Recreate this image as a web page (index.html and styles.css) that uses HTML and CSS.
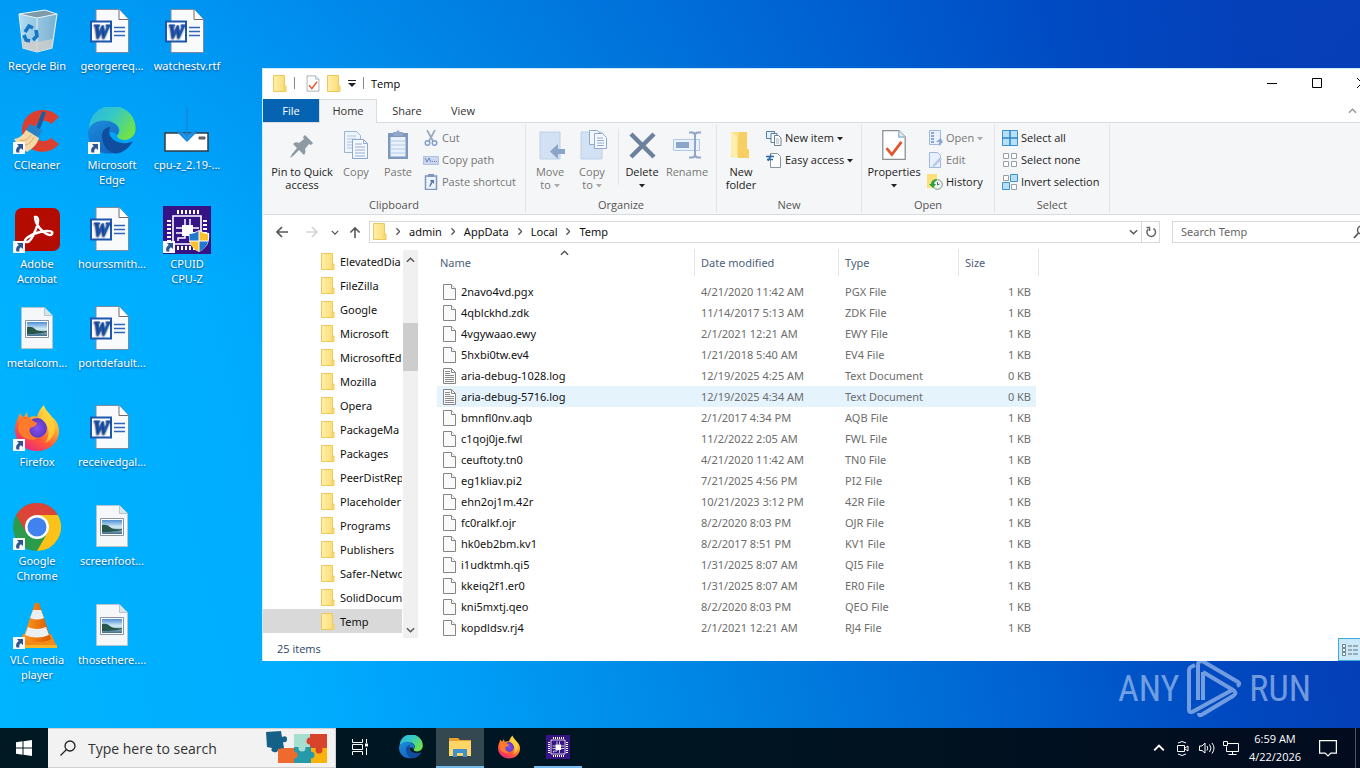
FILE: index.html
```html
<!DOCTYPE html>
<html lang="en">
<head>
<meta charset="utf-8">
<title>Temp</title>
<link rel="stylesheet" href="styles.css">
</head>
<body>
<svg class="sprite" aria-hidden="true">
  <defs>
    <linearGradient id="gFold" x1="0" x2="1"><stop offset="0" stop-color="#ffefa6"/><stop offset="1" stop-color="#fbdc76"/></linearGradient>
    <linearGradient id="gEdgeA" x1="0" y1="0" x2="1" y2=".6"><stop offset="0" stop-color="#27b5e8"/><stop offset=".5" stop-color="#36c9c4"/><stop offset="1" stop-color="#6fe24a"/></linearGradient>
    <linearGradient id="gEdgeB" x1="0" y1="0" x2=".6" y2="1"><stop offset="0" stop-color="#1b8edb"/><stop offset="1" stop-color="#1466c0"/></linearGradient>
    <linearGradient id="gFox" x1=".8" y1="0" x2=".2" y2="1"><stop offset="0" stop-color="#fff44f"/><stop offset=".35" stop-color="#ffa92e"/><stop offset=".65" stop-color="#ff5a36"/><stop offset="1" stop-color="#e8208a"/></linearGradient>
    <radialGradient id="gFoxIn"><stop offset="0" stop-color="#8a4ff0"/><stop offset="1" stop-color="#5b3bc4"/></radialGradient>
    <linearGradient id="gBin" x1="0" x2="1"><stop offset="0" stop-color="#cfe6f2"/><stop offset="1" stop-color="#8fb4c8"/></linearGradient>
    <linearGradient id="gSky" x1="0" y1="0" x2="0" y2="1"><stop offset="0" stop-color="#4f8fd6"/><stop offset=".5" stop-color="#d4ecf7"/><stop offset="1" stop-color="#3c6a8c"/></linearGradient>
    <linearGradient id="gCone" x1="0" x2="1"><stop offset="0" stop-color="#ff9a1f"/><stop offset="1" stop-color="#d95800"/></linearGradient>
  </defs>
  <symbol id="shortcut" viewBox="0 0 12 12"><path d="M0 0h12v12H0z" fill="#f6f8fa"/><path d="M4 2h6v6L8 6.3C6.300 7.200 6 8.500 6.400 10.500H3.500C2.400 7.600 3.500 5.300 5.800 3.900z" fill="#2d5591"/></symbol>
  <symbol id="folder" viewBox="0 0 14 17"><path d="M.5.5h11v10.500h1.500v5.500H.5z" fill="url(#gFold)" stroke="#edc95b"/><path d="M11 11v5" stroke="#f3cf62"/></symbol>
  <symbol id="file" viewBox="0 0 13 16"><path d="M.5.5h8l4 4v11H.5z" fill="#fafafa" stroke="#858585"/><path d="M8.500.5v4h4" fill="#fff" stroke="#858585"/></symbol>
  <symbol id="log" viewBox="0 0 13 16"><path d="M.5.5h8l4 4v11H.5z" fill="#fafafa" stroke="#858585"/><path d="M8.500.5v4h4M2 3.500h5M2 5.500h5M2 7.500h9M2 9.500h9M2 11.500h9M2 13.500h9" fill="none" stroke="#8a8a8a"/></symbol>
  <symbol id="props" viewBox="0 0 24 30"><path d="M1.500 1.500h15l6 6v21h-21z" fill="#fff" stroke="#8b9097" stroke-width="1.200"/><path d="M16.500 1.500v6h6" fill="#dceafb" stroke="#9ab2cf" stroke-width="1.200"/><path d="M5 18l5 6L19 12" fill="none" stroke="#e2562c" stroke-width="2.600"/></symbol>
  <symbol id="word" viewBox="0 0 48 48"><path d="M8 1.500h23l9.500 10V44.500H8z" fill="#f9fafc" stroke="#7d8ba0"/><path d="M31 1.500v10h9.500" fill="#fff" stroke="#72686d"/><path d="M26 19.500h11M26 23.500h11M26 27.500h11" stroke="#3165b8" stroke-width="1.400"/><path d="M2 12.500h22v22H2z" fill="#1d56ae"/><path d="M4 14.500h18v18H4z" fill="#fff"/><text x="13" y="30" text-anchor="middle" class="word-letter">W</text></symbol>
  <symbol id="picture" viewBox="0 0 48 48"><path d="M8.500 2.500h23l8 8v33h-31z" fill="#f6f7f8" stroke="#b5c4cd"/><path d="M31.500 2.500v8h8" fill="#d9e6ec" stroke="#b5c4cd"/><path d="M12.500 15.500h23v17h-23z" fill="#fff" stroke="#8994a4"/><path d="M14 17h20v14H14z" fill="url(#gSky)"/><path d="M14 22q5-1 8 2t12 2v1q-8 2-20 2z" fill="#28564b"/></symbol>
  <symbol id="edge" viewBox="0 0 48 48"><path d="M1 22A23 22 0 0 1 47.500 20c1 8-5 13-11 13-5 0-8-2-7-5 5-5 0-13-9-13C11 15 4 17 1 22z" fill="url(#gEdgeA)"/><path d="M0 25C2 15 12 12 21 14c8 2 12 9 8 14-2-3-6-4-9-2-6 4-4 15 6 20C11 49 0 39 0 25z" fill="url(#gEdgeB)"/><path d="M14 31c-1-6 3-11 8-11-3 7 2 15 12 16 5 1 9-1 11-2-4 8-13 14-20 12-6-2-10-8-11-15z" fill="#0f4d9e"/></symbol>
  <symbol id="firefox" viewBox="0 0 48 48"><path d="M2 26C2 19 5 14 7 9l3 5 4-6 1 6c4-2 7-2 9-1 1-5 4-9 7-12 1 5 4 7 8 12 4 3 7 8 7 14C46 39 36 47 24 47S2 38 2 26z" fill="url(#gFox)"/><circle cx="24" cy="24" r="10" fill="url(#gFoxIn)"/><path d="M7 14c5-3 10-1 13 3l4 2c0 2-3 4-7 5-2 5 3 10 9 10-9 5-21-1-21-11z" fill="#ff7b2b"/><path d="M26 13c6-2 4-7 6-9 2 4 6 6 8 12 4 10 1 19-8 23 6-8 5-18-6-26z" fill="#ffd43a" opacity=".85"/></symbol>
  <symbol id="cpuz" viewBox="0 0 48 48"><path d="M0 0h48v48H0z" fill="#371486"/><path d="M10 10h28v28H10z" fill="none" stroke="#fff" stroke-width="1.600"/><path d="M15 8V4M19 8V4M23 8V4M27 8V4M31 8V4M35 8V4M15 44v-4M19 44v-4M23 44v-4M27 44v-4M31 44v-4M35 44v-4M8 15H4M8 19H4M8 23H4M8 27H4M8 31H4M8 35H4M44 15h-4M44 19h-4M44 23h-4M44 27h-4M44 31h-4M44 35h-4" stroke="#fff" stroke-width="2"/><path d="M19 19h11v11H19z" fill="#fff"/><path d="M22 19v-6M27 19v-6M19 22h-6M19 27h-6M30 22h6M30 27h6M22 30v2h-7v3M27 30v6" stroke="#fff" stroke-width="1.500" fill="none"/></symbol>
  <symbol id="chev" viewBox="0 0 10 6"><path d="M1 1l4 4 4-4" fill="none" stroke="currentColor" stroke-width="1.600"/></symbol>
  <symbol id="tri" viewBox="0 0 6 4"><path d="M0 0h6L3 3.500z" fill="currentColor"/></symbol>
</svg>

<main class="desktop">
  <ul class="icons">
    <li><a class="shortcut" href="#"><svg class="ico" viewBox="0 0 48 48"><path d="M6 6l26-4 12 4-5 34-15 4-13-4z" fill="url(#gBin)" opacity=".85"/><path d="M6 6l18 4 20-4-12-4z" fill="#7e9bab" stroke="#e9f4fa"/><path d="M24 10v33M6 6l4 34 14 4 15-4 5-34" fill="none" stroke="#dcecf4" stroke-width="1.200"/><path d="M24 44l15-4 1-9-16 3zM10 40l14 4V34L9 31z" fill="#d7cfc8" opacity=".75"/><path d="M12 24l4-6 4 2M11 27l2 5 4 1M23 22l1 6-4 4" fill="none" stroke="#1476c4" stroke-width="3.600"/></svg><span>Recycle Bin</span></a></li>
    <li><a class="shortcut" href="#"><svg class="ico" viewBox="0 0 48 48"><path d="M46 10l-8 7c-6-7-17-2-17 7 0 10 11 13 17 7l8 6C35 51 9 46 9 24 9 2 35-3 46 10z" fill="#dc3f30"/><path d="M31 5l-7 19" stroke="#1c5c9d" stroke-width="4"/><path d="M17 17l12 6-4 9-13-8z" fill="#2782c6"/><path d="M13 23l13 8c-2 7-7 11-12 14-5-3-9-6-13-13 6-1 9-4 12-9z" fill="#f5d8a6"/><path d="M7 33q7 2 11-5M12 38q5 0 9-8" stroke="#d9ae6a" fill="none"/></svg><svg class="badge"><use href="#shortcut"/></svg><span>CCleaner</span></a></li>
    <li><a class="shortcut" href="#"><svg class="ico" viewBox="0 0 48 48"><rect x="2" y="2" width="45" height="43" rx="7" fill="#b30b00"/><path d="M22 11c4-1 4 5 1 12-3 8-7 14-10 13-4-2 5-8 14-10 8-2 14-1 12 2-2 4-13-4-16-12-1-3-1-5-1-5z" fill="none" stroke="#fff" stroke-width="2.400"/></svg><svg class="badge"><use href="#shortcut"/></svg><span>Adobe<br>Acrobat</span></a></li>
    <li><a class="shortcut" href="#"><svg class="ico"><use href="#picture"/></svg><span>metalcom...</span></a></li>
    <li><a class="shortcut" href="#"><svg class="ico"><use href="#firefox"/></svg><svg class="badge"><use href="#shortcut"/></svg><span>Firefox</span></a></li>
    <li><a class="shortcut" href="#"><svg class="ico" viewBox="0 0 48 48"><circle cx="24" cy="24" r="24" fill="#2a9c4b"/><path d="M24 24L3.200 12A24 24 0 0 1 44.800 12z" fill="#db4437"/><path d="M24 12h20.800A24 24 0 0 1 24 48L34.400 30z" fill="#fbc31a"/><path d="M3.200 12L13.600 30 24 24V12z" fill="#db4437"/><circle cx="24" cy="24" r="12" fill="#fff"/><circle cx="24" cy="24" r="9.500" fill="#4182ee"/></svg><svg class="badge"><use href="#shortcut"/></svg><span>Google<br>Chrome</span></a></li>
    <li><a class="shortcut" href="#"><svg class="ico" viewBox="0 0 48 48"><path d="M10 32h28l6 13H6z" fill="#f58a16"/><path d="M6 43h38v3H6z" fill="#f7b52c"/><path d="M22 1h4l12 36c-4 4-24 4-28 0z" fill="url(#gCone)"/><path d="M20 8h8l3 8q-7 3-14 0zM15 25q9 4 18 0l3 8q-12 5-24 0z" fill="#eceff1"/></svg><svg class="badge"><use href="#shortcut"/></svg><span>VLC media<br>player</span></a></li>
    <li><a class="shortcut" href="#"><svg class="ico"><use href="#word"/></svg><span>georgereq...</span></a></li>
    <li><a class="shortcut" href="#"><svg class="ico"><use href="#edge"/></svg><svg class="badge"><use href="#shortcut"/></svg><span>Microsoft<br>Edge</span></a></li>
    <li><a class="shortcut" href="#"><svg class="ico"><use href="#word"/></svg><span>hourssmith...</span></a></li>
    <li><a class="shortcut" href="#"><svg class="ico"><use href="#word"/></svg><span>portdefault...</span></a></li>
    <li><a class="shortcut" href="#"><svg class="ico"><use href="#word"/></svg><span>receivedgal...</span></a></li>
    <li><a class="shortcut" href="#"><svg class="ico"><use href="#picture"/></svg><span>screenfoot...</span></a></li>
    <li><a class="shortcut" href="#"><svg class="ico"><use href="#picture"/></svg><span>thosethere....</span></a></li>
    <li><a class="shortcut" href="#"><svg class="ico"><use href="#word"/></svg><span>watchestv.rtf</span></a></li>
    <li><a class="shortcut" href="#"><svg class="ico" viewBox="0 0 48 48"><path d="M2 26h43v18H2z" fill="#fff" stroke="#303c44" stroke-width="1.500"/><path d="M36 30h6v2h-6z" fill="#777" stroke="#555"/><path d="M24 0v30M14 24l10 10 10-10-10 4z" fill="#1e97ea" stroke="#1787d8" stroke-width="1.400"/></svg><span>cpu-z_2.19-...</span></a></li>
    <li><a class="shortcut" href="#"><svg class="ico"><use href="#cpuz"/></svg><svg class="badge"><use href="#shortcut"/></svg><svg class="shield" viewBox="0 0 22 22"><path d="M11 0c3 2 7 3 10 3 1 9-2 15-10 19C3 18 0 12 1 3c3 0 7-1 10-3z" fill="#fff"/><path d="M10.500 1v9.500H1.500V4c3 0 6-1 9-3zM11.500 11.500h8.500c-1 4-4 8-8.500 10z" fill="#2277cf"/><path d="M11.500 1v9.500H20V4c-3 0-6-1-8.500-3zM10.500 11.500H2c1 4 4 8 8.500 10z" fill="#fbc02d"/></svg><span>CPUID<br>CPU-Z</span></a></li>
  </ul>

  <div class="watermark">
    <span>ANY</span>
    <svg viewBox="0 0 56 62"><path d="M9 7L5 9Q3 10 3 13v38q0 5 5 2l40-22M12 42V8q0-7 6-4l34 20q3 2-1 4M17 14l30 18q5 3 0 6L17 56q-4 3-4-1M17 14v28" fill="none" stroke="currentColor" stroke-width="4"/></svg>
    <span>RUN</span>
  </div>

  <section class="window" aria-label="Temp">
    <header class="titlebar">
      <svg class="folder"><use href="#folder"/></svg><i class="rule"></i>
      <svg class="mini-props"><use href="#props"/></svg><svg class="folder"><use href="#folder"/></svg>
      <svg class="qat" viewBox="0 0 8 7"><path d="M0 .5h8" stroke="#222"/><path d="M0 3h8L4 7z" fill="#222"/></svg><i class="rule"></i>
      <h1>Temp</h1>
      <div class="controls">
        <button aria-label="Minimize"><svg viewBox="0 0 10 10"><path d="M0 5.500h10" stroke="#000"/></svg></button>
        <button aria-label="Maximize"><svg viewBox="0 0 10 10"><path d="M.5.5h9v9h-9z" stroke="#000" fill="none"/></svg></button>
        <button aria-label="Close"><svg viewBox="0 0 10 10"><path d="M0 0l10 10M10 0L0 10" stroke="#000"/></svg></button>
      </div>
    </header>
    <nav class="tabs">
      <button class="tab file">File</button><button class="tab active">Home</button><button class="tab">Share</button><button class="tab">View</button>
      <button class="collapse" aria-label="Collapse ribbon"><svg class="chev up"><use href="#chev"/></svg></button>
    </nav>
    <div class="ribbon">
      <section class="group clipboard"><div class="tools">
        <button class="big pin"><svg viewBox="0 0 32 32"><path d="M19 6l8 8-2 2-2-1-4 5c1 3 0 5-1 6l-5-5-6 6-3 2 2-4 5-6-4-4c2-2 4-2 6-1l5-4-1-2z" fill="#8d99a3"/></svg><span>Pin to Quick<br>access</span></button>
        <button class="big off"><svg viewBox="0 0 32 32"><path d="M4.500 2.500h12l4 4v17h-16z" fill="#eef4fd" stroke="#9cb4d4"/><path d="M7 7h9M7 10h9M7 13h9M7 16h9M7 19h9" stroke="#afc3e0"/><path d="M12.500 10.500h11l4 4v15h-15z" fill="#f5f9ff" stroke="#8ba6cb"/><path d="M23.500 10.500v4h4M15 15h7M15 18h10M15 21h10M15 24h10M15 27h10" fill="none" stroke="#94abd0"/></svg><span>Copy</span></button>
        <button class="big off"><svg viewBox="0 0 32 32"><path d="M6 4h20v26H6z" fill="#7d97be"/><path d="M8.500 8h15v19.500h-15z" fill="#e9f2fc"/><path d="M9 12h14M9 16h14M9 20h14M9 24h14" stroke="#b4c9e5"/><path d="M11 3h3l2-2 2 2h3v4H11z" fill="#90a7c9"/></svg><span>Paste</span></button>
        <div class="stack">
          <button class="small off"><svg viewBox="0 0 16 16"><path d="M4 0l6 11M12 0L6 11" stroke="#98a8bd" stroke-width="1.700"/><circle cx="4.500" cy="13" r="2.300" fill="none" stroke="#7f9fcf" stroke-width="1.500"/><circle cx="11.500" cy="13" r="2.300" fill="none" stroke="#7f9fcf" stroke-width="1.500"/></svg><span>Cut</span></button>
          <button class="small off"><svg viewBox="0 0 16 16"><path d="M.5 4.500h15v8H.5z" fill="#c9d8f0" stroke="#b1c3e0"/><path d="M2 6l2 4 2-4 2 4M9 9.500h1M11 9.500h1M13 9.500h1" stroke="#6b86b5" fill="none"/></svg><span>Copy path</span></button>
          <button class="small off"><svg viewBox="0 0 16 16"><path d="M2.500 2h11v13.500h-11z" fill="#eef4fc" stroke="#7d97be" stroke-width="1.500"/><path d="M5 0h6v3H5z" fill="#7d97be"/><path d="M7 6h4v4L9.500 8.600 7.500 12.500H6L8 8z" fill="#5577ad"/></svg><span>Paste shortcut</span></button>
        </div></div><h2>Clipboard</h2></section>
      <section class="group organize"><div class="tools">
        <button class="big off"><svg viewBox="0 0 32 32"><path d="M6 3h20v27H6z" fill="#d3e1f4" stroke="#bdd0ea"/><path d="M31 20v5h-7v5l-8-7.500 8-7.500v5z" fill="#8ba5c9"/></svg><span>Move<br>to <svg class="tri"><use href="#tri"/></svg></span></button>
        <button class="big off"><svg viewBox="0 0 32 32"><path d="M5 3h21v27H5z" fill="#d3e1f4" stroke="#bdd0ea"/><path d="M13.500 1.500h8l3 3v11h-11z" fill="#f2f7fe" stroke="#8fa9ce"/><path d="M18.500 4.500h8l4 4v11h-12z" fill="#f5f9ff" stroke="#8fa9ce"/><path d="M21 9h6M21 11.500h7M21 14h7M21 16.500h7" stroke="#94abd0"/></svg><span>Copy<br>to <svg class="tri"><use href="#tri"/></svg></span></button>
        <i class="sep"></i>
        <button class="big"><svg viewBox="0 0 32 32"><path d="M5 5l23 23M28 5L5 28" stroke="#6c819c" stroke-width="4.500"/></svg><span>Delete<br><svg class="tri"><use href="#tri"/></svg></span></button>
        <button class="big off"><svg viewBox="0 0 32 32"><path d="M2.500 10.500h26v11h-26z" fill="#e8f1fc" stroke="#b3c8e4"/><path d="M5 13h13v6H5z" fill="#8ba5c9"/><path d="M18 3.500h3q3 0 3 3v19q0 3-3 3h-3M30 3.500h-3q-3 0-3 3v19q0 3 3 3h3" fill="none" stroke="#8fa6c6" stroke-width="2"/></svg><span>Rename</span></button>
        </div><h2>Organize</h2></section>
      <section class="group new"><div class="tools">
        <button class="big"><svg viewBox="0 0 32 32"><path d="M6 3h16v25H6z" fill="#fde08a"/><path d="M14 3h8v16l2 2v8H13V15z" fill="#f8cf62"/><path d="M6 3l6 4v22l-6-3z" fill="#ffefae"/></svg><span>New<br>folder</span></button>
        <div class="stack">
          <button class="small"><svg viewBox="0 0 16 16"><path d="M.5 1.500h8v7h-8z" fill="#e4f0fb" stroke="#547fa6"/><path d="M5 3.500h6v9H5z" fill="#fff" stroke="#547fa6"/><path d="M8.500 5.500h4l2.500 2.500v7.500H8.500z" fill="#fff" stroke="#6f7f8f"/><path d="M10 9h3M10 11h3M10 13h3" stroke="#9fb0c0"/></svg><span>New item <svg class="tri"><use href="#tri"/></svg></span></button>
          <button class="small"><svg viewBox="0 0 16 16"><path d="M4.500 1.500h7l3 3v11h-10z" fill="#fff" stroke="#8c939b"/><path d="M0 4.500h8M1 7.500h6M5 2.500L2 9" stroke="#286ba8" stroke-width="1.300"/></svg><span>Easy access <svg class="tri"><use href="#tri"/></svg></span></button>
        </div></div><h2>New</h2></section>
      <section class="group open"><div class="tools">
        <button class="big props"><svg><use href="#props"/></svg><span>Properties<br><svg class="tri"><use href="#tri"/></svg></span></button>
        <div class="stack">
          <button class="small off"><svg viewBox="0 0 16 16"><path d="M2.500.5h11v14h-11z" fill="#e7f0fc" stroke="#9fb7d8"/><path d="M4 3h3M4 6h3M4 9h3M4 12h3" stroke="#6f92c2" stroke-width="1.500"/><path d="M12 16v-4h-3l4.500-4L16 12z" fill="#8fa9ce"/></svg><span>Open <svg class="tri"><use href="#tri"/></svg></span></button>
          <button class="small off"><svg viewBox="0 0 16 16"><path d="M2.500.5h8l3 3v12h-11z" fill="#e7f0fc" stroke="#9fb7d8"/><path d="M5 14l8-9 2 2-8 8z" fill="#b4c9e8"/></svg><span>Edit</span></button>
          <button class="small"><svg viewBox="0 0 16 16"><path d="M0 0h10v14H0z" fill="#fbe07c"/><circle cx="10.500" cy="10.500" r="4.800" fill="#eef4ee" stroke="#7b9581"/><path d="M10.500 8v3l2-1" fill="none" stroke="#567"/><path d="M9 5q-5 1-5 5H2l4 4 3-4H7q0-2 3-4z" fill="#2ca03a"/></svg><span>History</span></button>
        </div></div><h2>Open</h2></section>
      <section class="group select"><div class="tools">
        <div class="stack">
          <button class="small"><svg viewBox="0 0 16 16"><path d="M.5.5h15v15H.5z" fill="#b9e0fb" stroke="#3c93d4"/><path d="M8 0v16M0 8h16" stroke="#2c84c9" stroke-width="1.500"/></svg><span>Select all</span></button>
          <button class="small"><svg viewBox="0 0 16 16"><path d="M1.500 1.500h5v5h-5zM9.500 1.500h5v5h-5zM1.500 9.500h5v5h-5zM9.500 9.500h5v5h-5z" fill="#fff" stroke="#999fa6"/></svg><span>Select none</span></button>
          <button class="small"><svg viewBox="0 0 16 16"><path d="M1.500 1.500h5v5h-5zM9.500 10.500h5v5h-5z" fill="#fff" stroke="#999fa6"/><path d="M8.500.5h7v7h-7zM.5 8.500h7v7h-7z" fill="#b9e0fb" stroke="#3c93d4"/></svg><span>Invert selection</span></button>
        </div></div><h2>Select</h2></section>
    </div>
    <div class="address-row">
      <button class="nav" aria-label="Back"><svg viewBox="0 0 14 12"><path d="M13 6H2M7 1L2 6l5 5" fill="none" stroke="#555" stroke-width="1.700"/></svg></button>
      <button class="nav pale" aria-label="Forward"><svg viewBox="0 0 14 12"><path d="M1 6h11M7 1l5 5-5 5" fill="none" stroke="#d5d5d5" stroke-width="1.700"/></svg></button>
      <button class="nav recent" aria-label="Recent"><svg class="chev"><use href="#chev"/></svg></button>
      <button class="nav upward" aria-label="Up"><svg viewBox="0 0 12 13"><path d="M6 13V2M1 7l5-5 5 5" fill="none" stroke="#555" stroke-width="1.700"/></svg></button>
      <div class="crumbs"><svg class="folder"><use href="#folder"/></svg><svg class="chev side"><use href="#chev"/></svg><a href="#">admin</a><svg class="chev side"><use href="#chev"/></svg><a href="#">AppData</a><svg class="chev side"><use href="#chev"/></svg><a href="#">Local</a><svg class="chev side"><use href="#chev"/></svg><a href="#">Temp</a>
        <div class="crumb-tools">
          <button class="drop" aria-label="Previous locations"><svg class="chev"><use href="#chev"/></svg></button>
          <button class="refresh" aria-label="Refresh"><svg viewBox="0 0 12 12"><path d="M8.500 2.500A4.300 4.300 0 1 1 3 3.300M1.500 1.500h3v3.500" fill="none" stroke="#666" stroke-width="1.500"/></svg></button>
        </div>
      </div>
      <div class="search"><input type="text" placeholder="Search Temp" aria-label="Search Temp"><svg viewBox="0 0 14 14"><circle cx="8.500" cy="5" r="4" fill="none" stroke="#555" stroke-width="1.400"/><path d="M5.500 8L1 13" stroke="#555" stroke-width="1.800"/></svg></div>
    </div>
    <div class="content">
      <ul class="tree">
        <li><svg class="folder"><use href="#folder"/></svg>ElevatedDia</li><li><svg class="folder"><use href="#folder"/></svg>FileZilla</li><li><svg class="folder"><use href="#folder"/></svg>Google</li><li><svg class="folder"><use href="#folder"/></svg>Microsoft</li><li><svg class="folder"><use href="#folder"/></svg>MicrosoftEd</li><li><svg class="folder"><use href="#folder"/></svg>Mozilla</li><li><svg class="folder"><use href="#folder"/></svg>Opera</li><li><svg class="folder"><use href="#folder"/></svg>PackageMa</li><li><svg class="folder"><use href="#folder"/></svg>Packages</li><li><svg class="folder"><use href="#folder"/></svg>PeerDistRep</li><li><svg class="folder"><use href="#folder"/></svg>Placeholder</li><li><svg class="folder"><use href="#folder"/></svg>Programs</li><li><svg class="folder"><use href="#folder"/></svg>Publishers</li><li><svg class="folder"><use href="#folder"/></svg>Safer-Netwo</li><li><svg class="folder"><use href="#folder"/></svg>SolidDocum</li><li class="current"><svg class="folder"><use href="#folder"/></svg>Temp</li>
      </ul>
      <div class="scrollbar"><svg class="chev up"><use href="#chev"/></svg><i></i><svg class="chev"><use href="#chev"/></svg></div>
      <div class="listing">
        <svg class="chev up sort"><use href="#chev"/></svg>
        <table>
          <colgroup><col class="c-name"><col class="c-date"><col class="c-type"><col class="c-size"></colgroup>
          <thead><tr><th scope="col">Name</th><th scope="col">Date modified</th><th scope="col">Type</th><th scope="col">Size</th></tr></thead>
          <tbody>
            <tr><td><svg><use href="#file"/></svg>2navo4vd.pgx</td><td>4/21/2020 11:42 AM</td><td>PGX File</td><td>1 KB</td></tr>
            <tr><td><svg><use href="#file"/></svg>4qblckhd.zdk</td><td>11/14/2017 5:13 AM</td><td>ZDK File</td><td>1 KB</td></tr>
            <tr><td><svg><use href="#file"/></svg>4vgywaao.ewy</td><td>2/1/2021 12:21 AM</td><td>EWY File</td><td>1 KB</td></tr>
            <tr><td><svg><use href="#file"/></svg>5hxbi0tw.ev4</td><td>1/21/2018 5:40 AM</td><td>EV4 File</td><td>1 KB</td></tr>
            <tr><td><svg><use href="#log"/></svg>aria-debug-1028.log</td><td>12/19/2025 4:25 AM</td><td>Text Document</td><td>0 KB</td></tr>
            <tr class="hover"><td><svg><use href="#log"/></svg>aria-debug-5716.log</td><td>12/19/2025 4:34 AM</td><td>Text Document</td><td>0 KB</td></tr>
            <tr><td><svg><use href="#file"/></svg>bmnfl0nv.aqb</td><td>2/1/2017 4:34 PM</td><td>AQB File</td><td>1 KB</td></tr>
            <tr><td><svg><use href="#file"/></svg>c1qoj0je.fwl</td><td>11/2/2022 2:05 AM</td><td>FWL File</td><td>1 KB</td></tr>
            <tr><td><svg><use href="#file"/></svg>ceuftoty.tn0</td><td>4/21/2020 11:42 AM</td><td>TN0 File</td><td>1 KB</td></tr>
            <tr><td><svg><use href="#file"/></svg>eg1kliav.pi2</td><td>7/21/2025 4:56 PM</td><td>PI2 File</td><td>1 KB</td></tr>
            <tr><td><svg><use href="#file"/></svg>ehn2oj1m.42r</td><td>10/21/2023 3:12 PM</td><td>42R File</td><td>1 KB</td></tr>
            <tr><td><svg><use href="#file"/></svg>fc0ralkf.ojr</td><td>8/2/2020 8:03 PM</td><td>OJR File</td><td>1 KB</td></tr>
            <tr><td><svg><use href="#file"/></svg>hk0eb2bm.kv1</td><td>8/2/2017 8:51 PM</td><td>KV1 File</td><td>1 KB</td></tr>
            <tr><td><svg><use href="#file"/></svg>i1udktmh.qi5</td><td>1/31/2025 8:07 AM</td><td>QI5 File</td><td>1 KB</td></tr>
            <tr><td><svg><use href="#file"/></svg>kkeiq2f1.er0</td><td>1/31/2025 8:07 AM</td><td>ER0 File</td><td>1 KB</td></tr>
            <tr><td><svg><use href="#file"/></svg>kni5mxtj.qeo</td><td>8/2/2020 8:03 PM</td><td>QEO File</td><td>1 KB</td></tr>
            <tr><td><svg><use href="#file"/></svg>kopdldsv.rj4</td><td>2/1/2021 12:21 AM</td><td>RJ4 File</td><td>1 KB</td></tr>
          </tbody>
        </table>
      </div>
    </div>
    <footer class="status"><span>25 items</span><button aria-label="Details view"><svg viewBox="0 0 18 16"><path d="M1.500 2.500h3v3h-3zM1.500 6.500h3v3h-3zM1.500 10.500h3v3h-3z" fill="#fff" stroke="#6b7f8d"/><path d="M7 4h4M12 4h5M7 8h4M12 8h5M7 12h4M12 12h5" stroke="#5e6f7b"/></svg></button></footer>
  </section>
</main>

<footer class="taskbar">
  <button class="start" aria-label="Start"><svg viewBox="0 0 16 16"><path d="M0 2.200l6.500-.9v6.200H0zM7.500 1.200L16 0v7.500H7.500zM0 8.500h6.500v6.200L0 13.800zM7.500 8.500H16V16l-8.500-1.200z" fill="#fff"/></svg></button>
  <label class="find"><svg class="lens" viewBox="0 0 16 16"><circle cx="10" cy="6" r="5" fill="none" stroke="#222" stroke-width="1.300"/><path d="M6.500 9.500L.5 15.500" stroke="#222" stroke-width="1.300"/></svg><input type="text" placeholder="Type here to search" aria-label="Type here to search">
    <svg class="puzzle" viewBox="0 0 62 38"><path d="M28 5h16v14H28z" fill="#a5dfd0"/><path d="M44 5h17v15H44z" fill="#d8432b"/><path d="M12 19h16v15H12z" fill="#ee6a2d"/><path d="M28 18h17v16H28z" fill="#2699aa"/><path d="M45 19h16v15H45z" fill="#fbb30c"/><circle cx="44" cy="12" r="3.500" fill="#d8432b"/><circle cx="36" cy="19" r="3.500" fill="#a5dfd0"/><circle cx="53" cy="21" r="3.500" fill="#d8432b"/><circle cx="28" cy="26" r="3.500" fill="#ee6a2d"/><circle cx="45" cy="26" r="3.500" fill="#2699aa"/><path d="M0 3l15-1 1 6q5-2 5 2t-4 3l1 6-6 1q0 4-4 3t-2-4l-5-1z" fill="#146086"/></svg></label>
  <button class="task" aria-label="Task view"><svg viewBox="0 0 16 16"><path d="M.5 0v3.500h10V0M.5 16v-3.500h10V16M.5 5.500h10v5H.5zM14.500 0v4M14.500 9v7" fill="none" stroke="#fff"/><path d="M13 4.500h3v3h-3z" fill="#fff"/></svg></button>
  <button class="task" aria-label="Microsoft Edge"><svg class="app"><use href="#edge"/></svg></button>
  <button class="task running active" aria-label="File Explorer"><svg class="app" viewBox="0 0 24 24"><path d="M1 3h9l2 2h11v16H1z" fill="#e9a12d"/><path d="M1 6h22v15H1z" fill="#ffd666"/><path d="M5 22v-8h14v8h-4v-4H9v4z" fill="#3f90cf"/></svg></button>
  <button class="task" aria-label="Firefox"><svg class="app"><use href="#firefox"/></svg></button>
  <button class="task running" aria-label="CPU-Z"><svg class="app"><use href="#cpuz"/></svg></button>
  <div class="tray">
    <svg class="chev up"><use href="#chev"/></svg>
    <svg viewBox="0 0 16 16"><path d="M2.500 5.500h7v6h-7zM10 8l3-2v5l-3-2M3 3q4-3 8 0M3 14q4 3 8 0" fill="none" stroke="#fff"/></svg>
    <svg viewBox="0 0 16 16"><path d="M.5 6v4.500H3L6 13V3L3 6zM8 6q1.500 2 0 4.500M10.500 4.500q3 3.500 0 7.500M13 3q4 5 0 10.500" fill="none" stroke="#fff"/></svg>
    <svg viewBox="0 0 16 16"><path d="M5 3.500h10.500v8h-12v-5M9.500 11.500v3M5.500 14.500h8M.5 1.500h4v4h-4z" fill="none" stroke="#fff"/></svg>
    <time datetime="2026-04-22T06:59">6:59 AM<br>4/22/2026</time>
    <svg class="notice" viewBox="0 0 16 16"><path d="M.5 1.500h15v11h-5L8 15l-2.500-2.500h-5z" fill="none" stroke="#fff" stroke-width="1.200"/></svg>
    <i class="peek"></i>
  </div>
</footer>
</body>
</html>
```

FILE: styles.css
```css
* { box-sizing: border-box; }
body {
  margin: 0;
  min-height: 100vh;
  display: flex;
  flex-direction: column;
  font: 11px/15px "Open Sans", "Noto Sans", sans-serif;
  color: #222;
  overflow: hidden;
}
button { border: 0; padding: 0; background: none; font: inherit; color: inherit; }
a { color: inherit; text-decoration: none; }
ul { list-style: none; margin: 0; padding: 0; }
h1, h2 { margin: 0; font: inherit; }
svg { display: block; flex: none; }
.sprite { position: absolute; width: 0; height: 0; }
.word-letter { font: italic bold 18px "Liberation Serif", serif; fill: #1d56ae; stroke: #1d56ae; }

.desktop {
  flex: 1;
  position: relative;
  overflow: hidden;
  background:
    linear-gradient(180deg, rgba(0, 80, 205, .22) 0%, rgba(0, 80, 205, 0) 40%),
    linear-gradient(76deg, #00b4ff 0%, #00adff 20%, #009ff7 30%, #0086e4 46%, #0064d2 66%, #0049c0 80%, #063cb4 92%, #083ab2 100%);
}
.icons {
  display: grid;
  grid-template-rows: repeat(7, 99px);
  grid-auto-flow: column;
  grid-auto-columns: 75px;
}
.shortcut {
  position: relative;
  display: flex;
  flex-direction: column;
  align-items: center;
  width: 74px;
  padding-top: 8px;
  color: #fff;
  font-family: "Noto Sans", "Open Sans", sans-serif;
  text-align: center;
  text-shadow: 0 1px 2px rgba(0, 30, 80, .7);
}
.shortcut .ico { width: 48px; height: 48px; margin-bottom: 2px; }
.shortcut span { white-space: nowrap; }
.shortcut .badge { position: absolute; left: 13px; top: 43px; width: 12px; height: 12px; }
.shortcut .shield { position: absolute; left: 38px; top: 32px; width: 22px; height: 22px; }

.watermark {
  position: absolute;
  right: 49px;
  bottom: 8px;
  display: flex;
  align-items: center;
  gap: 7px;
  color: rgba(190, 212, 245, .6);
  font: 36px/62px "Liberation Sans Narrow", "Roboto Condensed", "Open Sans", sans-serif;
}
.watermark svg { width: 56px; height: 62px; }

.window {
  position: absolute;
  left: 262px;
  right: -25px;
  top: 68px;
  background: #fff;
  border: 1px solid #cdeeff;
  border-bottom: 0;
}
.folder { width: 14px; height: 17px; }
.chev { width: 9px; height: 6px; color: #555; }
.chev.up { transform: rotate(180deg); }
.chev.side { transform: rotate(-90deg); }
.tri { width: 6px; height: 4px; display: inline-block; vertical-align: middle; }

.titlebar { display: flex; align-items: center; height: 30px; padding: 0 0 2px 10px; gap: 7px; }
.titlebar .rule { width: 1px; height: 12px; background: #8a8a8a; }
.titlebar h1 { font-size: 11px; color: #000; }
.mini-props { width: 14px; height: 17px; margin-left: 4px; }
.qat { width: 8px; height: 7px; }
.controls { margin-left: auto; display: flex; }
.controls button { width: 45px; height: 28px; display: grid; place-items: center; }
.controls svg { width: 10px; height: 10px; }

.tabs { display: flex; height: 24px; border-bottom: 1px solid #dadbdc; }
.tab { height: 24px; width: 56px; padding-bottom: 2px; color: #333; }
.tab.file { background: #0563b1; color: #fff; height: 23px; padding-bottom: 0; }
.tab.active { width: 58px; background: #f5f6f7; border: 1px solid #dadbdc; border-bottom: 0; }
.tab.active + .tab { width: 60px; }
.tabs .tab:nth-child(4) { width: 52px; }
.collapse { margin-left: auto; padding-right: 27px; }
.collapse .chev { color: #999; }

.ribbon { display: flex; height: 92px; padding: 2px 0; background: #f5f6f7; border-bottom: 1px solid #dadbdc; }
.group { display: flex; flex-direction: column; border-right: 1px solid #e2e3e4; }
.group h2 { text-align: center; color: #555; }
.tools { flex: 1; display: flex; align-items: flex-start; padding: 2px 0 0 3px; }
.clipboard { width: 263px; }
.organize { width: 191px; }
.new { width: 145px; }
.open { width: 133px; }
.select { width: 115px; }
.big { width: 42px; padding-top: 2px; line-height: 13px; }
.big > svg { width: 32px; height: 32px; margin: 0 auto 4px; }
.big.pin { width: 66px; margin-left: 3px; white-space: nowrap; }
.big.props { width: 58px; }
.sep + .big + .big { width: 48px; }
.sep { width: 1px; height: 56px; margin: 2px 2px 0 5px; background: #e2e3e4; }
.off { color: #767676; }
.off .tri { color: #aaa; }
.stack { display: grid; grid-auto-rows: 22px; margin-left: 4px; }
.small { display: flex; align-items: center; gap: 3px; white-space: nowrap; }
.small > svg { width: 16px; height: 16px; }
.small > span { padding-bottom: 2px; }

.address-row { display: flex; align-items: center; height: 34px; padding: 0 8px 0 12px; font-family: "Noto Sans", "Open Sans", sans-serif; }
.nav svg { width: 14px; height: 12px; }
.nav.pale { margin-left: 16px; }
.nav.recent { margin-left: 12px; }
.nav.recent svg { width: 8px; height: 5px; }
.nav.upward { margin-left: 9px; margin-right: 7px; }
.crumbs { flex: 1; display: flex; align-items: center; gap: 7px; height: 22px; padding: 0 0 1px 3px; border: 1px solid #d9d9d9; color: #111; }
.crumbs .chev.side { width: 8px; height: 5px; }
.crumb-tools { display: flex; align-items: center; gap: 3px; margin-left: auto; }
.refresh { height: 20px; padding: 0 2px 0 3px; border-left: 1px solid #d9d9d9; }
.refresh svg { width: 12px; height: 12px; }
.search { display: flex; align-items: center; width: 204px; height: 22px; margin-left: 12px; padding: 0 8px 1px 8px; border: 1px solid #d9d9d9; }
.search input { flex: 1; min-width: 0; border: 0; padding: 0; font: inherit; background: none; }
.search svg { width: 14px; height: 14px; }
input::placeholder { color: #666; opacity: 1; }

.content { display: flex; height: 389px; overflow: hidden; font-family: "Noto Sans", "Open Sans", sans-serif; }
.tree { width: 139px; overflow: hidden; color: #111; }
.tree li { display: flex; align-items: center; gap: 5px; height: 24px; padding-left: 58px; white-space: nowrap; }
.tree .current { background: #d9d9d9; }
.scrollbar { width: 15px; margin: 1px 19px 0 1px; padding: 7px 3px 5px; display: flex; flex-direction: column; background: #f0f0f0; }
.scrollbar i { height: 48px; margin: 60px -3px auto; background: #cdcdcd; }
.listing { position: relative; flex: 1; }
.sort { position: absolute; left: 123px; top: 1px; }
table { width: 602px; table-layout: fixed; border-spacing: 0; }
.c-name { width: 258px; }
.c-date { width: 144px; }
.c-type { width: 120px; }
.c-size { width: 80px; }
th { height: 27px; padding: 0 6px; text-align: left; font-weight: 400; color: #4c607a; border-right: 1px solid #e5e5e5; }
th:first-child { padding-left: 3px; }
thead::after { content: ""; display: block; height: 5px; }
td { height: 21px; padding: 0 6px; color: #6d6d6d; white-space: nowrap; }
td:first-child { display: flex; align-items: center; gap: 5px; padding: 0 6px; color: #111; }
td:last-child { text-align: right; border-right: 3px solid transparent; background-clip: padding-box; padding-right: 5px; }
td svg { width: 13px; height: 16px; }
.hover td { background-color: #e5f3fd; }

.status { display: flex; align-items: center; justify-content: space-between; height: 23px; padding: 0 23px 0 14px; color: #2c4468; }
.status span { padding-bottom: 2px; }
.status button { width: 23px; height: 23px; padding: 2px; background: #cbe8f9; border: 1px solid #3eaadf; }
.status svg { width: 18px; height: 16px; }

.taskbar { display: flex; height: 40px; color: #fff; background: linear-gradient(90deg, #001923, #001522 50%, #020c1e); }
.start { width: 48px; display: grid; place-items: center; }
.start svg { width: 16px; height: 16px; }
.find { display: flex; align-items: center; width: 288px; padding-left: 12px; background: #f2f2f2; border: 1px solid #d0d0d0; border-left-width: 0; }
.lens { width: 16px; height: 16px; margin-right: 12px; }
.find input { flex: 1; min-width: 0; border: 0; padding: 1px 0 0; background: none; font: 14px/21px "Open Sans", "Noto Sans", sans-serif; }
.find input::placeholder { color: #333; }
.puzzle { width: 62px; height: 38px; margin-right: 7px; }
.task { width: 48px; margin-right: 1px; display: grid; place-items: center; border-bottom: 2px solid transparent; }
.task svg { width: 16px; height: 16px; }
.task .app { width: 24px; height: 24px; }
.task.running { border-bottom-color: #76b9ed; }
.task.active { background: #334851; }
.find + .task + .task { margin-left: 2px; }
.tray { margin-left: auto; display: flex; align-items: center; gap: 8px; }
.tray svg { width: 16px; height: 16px; }
.tray .chev { width: 12px; height: 8px; color: #fff; margin-right: 2px; }
.tray time { width: 56px; margin-right: 4px; font-size: 11px; line-height: 18px; text-align: center; }
.tray .notice { margin: 0 10px 0 4px; width: 18px; height: 18px; }
.peek { width: 5px; align-self: stretch; border-left: 1px solid #4b5563; }
```
